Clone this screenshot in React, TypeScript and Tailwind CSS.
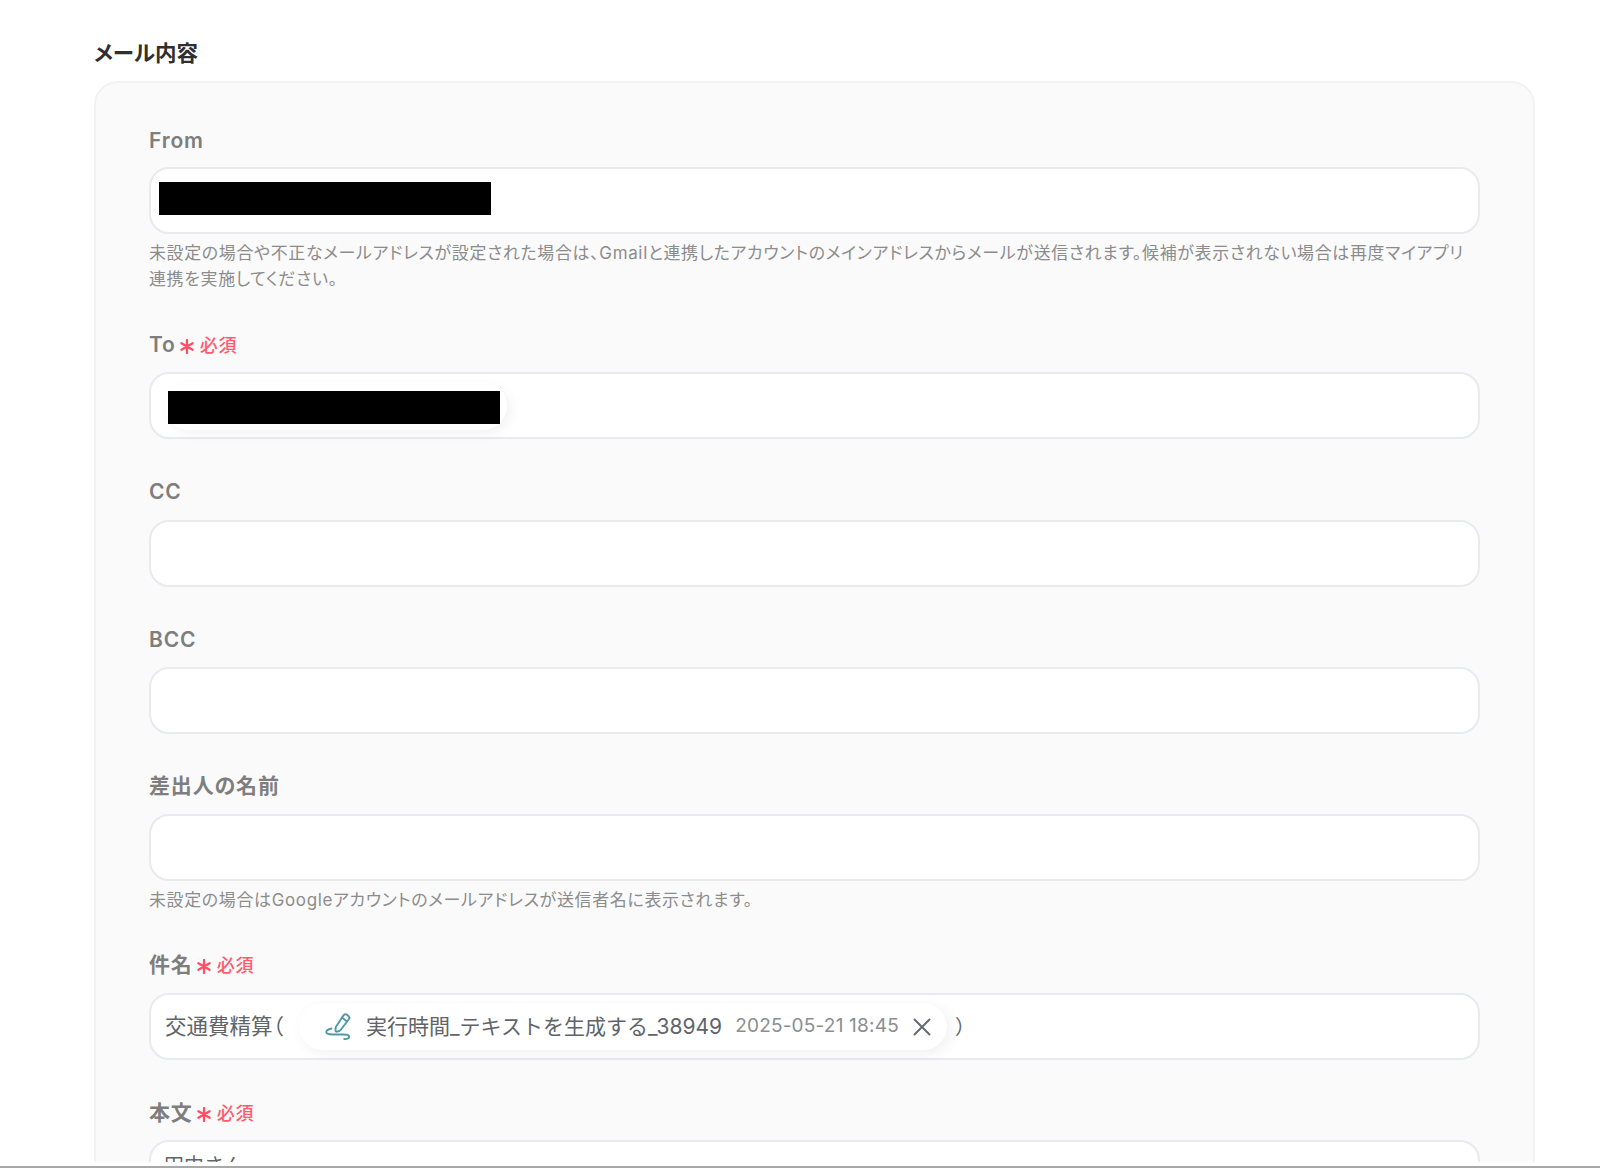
const font = "font-['Inter','Noto_Sans_CJK_JP',sans-serif]";

function PromptIcon() {
  return (
    <svg className="w-[26px] h-[28px] shrink-0" viewBox="0 0 26 28" fill="none" stroke="#4f98a8" strokeWidth="1.9" strokeLinecap="round" strokeLinejoin="round">
      <path d="M18.6 2.2a2.4 2.4 0 0 1 3.4-.4l1.4 1.1a2.4 2.4 0 0 1 .4 3.3L15.6 17a3 3 0 0 1-1.4 1l-2.4.7a1 1 0 0 1-1.3-1l.1-2.6a3 3 0 0 1 .6-1.7z" />
      <path d="M17 4.6l5 3.8" />
      <path d="M6.5 15.5c-2.7.6-5.2 1.8-5.2 3.6 0 2 2.6 2.4 6.4 2.4h10.5c3.4 0 6 .5 6 2.3 0 1.7-2.4 2.6-5 2.2" />
    </svg>
  );
}

function Required() {
  return (
    <span className="flex items-center text-[#ff5a6e] text-[18px] font-medium ml-[4px] gap-[6px]">
      <svg className="w-[14px] h-[15px] mt-[3px]" viewBox="0 0 14 15" fill="none" stroke="#ff4d63" strokeWidth="2.2" strokeLinecap="round">
        <path d="M7 1v13M1.4 4.2l11.2 6.6M12.6 4.2L1.4 10.8" />
      </svg>
      必須
    </span>
  );
}

function Label({ text, required }: { text: string; required?: boolean }) {
  return (
    <div className="flex items-center h-[30px] text-[21px] font-semibold tracking-[0.04em] [font-feature-settings:'palt'] text-[#7e7e7e]">
      {text}
      {required && <Required />}
    </div>
  );
}

function Field({ children }: { children?: React.ReactNode }) {
  return (
    <div className="flex items-center h-[67px] w-full rounded-[20px] border-2 border-[#e8eaee] bg-white">
      {children}
    </div>
  );
}

function Help({ children }: { children: React.ReactNode }) {
  return (
    <p className="mt-[6px] text-[16.95px] leading-[26px] tracking-[0.04em] [font-feature-settings:'palt'] text-[#8c8c8c]">
      {children}
    </p>
  );
}

export default function App() {
  return (
    <div className={`${font} w-[1600px] h-[1168px] overflow-hidden bg-white flex flex-col`}>
      <div className="h-[1162px] shrink-0 overflow-hidden pl-[94px] pr-[65px] pt-[37px]">
        <h2 className="text-[21.5px] leading-[32px] font-semibold [font-feature-settings:'palt'] text-[#2f2f2f]">メール内容</h2>
        <div className="mt-[12px] rounded-[24px] border-2 border-[#f2f2f3] bg-[#fafafa] px-[53px] pt-[43px] pb-[40px]">
          <Label text="From" />
          <div className="mt-[11px]">
            <Field>
              <div className="ml-[8px] mb-[4px] w-[332px] h-[33px] bg-black" />
            </Field>
          </div>
          <Help>
            未設定の場合や不正なメールアドレスが設定された場合は、Gmailと連携したアカウントのメインアドレスからメールが送信されます。候補が表示されない場合は再度マイアプリ連携を実施してください。
          </Help>

          <div className="mt-[38px]">
            <Label text="To" required />
          </div>
          <div className="mt-[12px]">
            <Field>
              <div className="ml-[14px] flex items-center h-[48px] pl-[3px] pr-[7px] rounded-full bg-white shadow-[4px_4px_12px_rgba(0,0,0,0.05)]">
                <div className="mt-[3px] w-[332px] h-[33px] bg-black" />
              </div>
            </Field>
          </div>

          <div className="mt-[38px]">
            <Label text="CC" />
          </div>
          <div className="mt-[13px]">
            <Field />
          </div>

          <div className="mt-[38px]">
            <Label text="BCC" />
          </div>
          <div className="mt-[12px]">
            <Field />
          </div>

          <div className="mt-[37px]">
            <Label text="差出人の名前" />
          </div>
          <div className="mt-[13px]">
            <Field />
          </div>
          <Help>未設定の場合はGoogleアカウントのメールアドレスが送信者名に表示されます。</Help>

          <div className="mt-[37px]">
            <Label text="件名" required />
          </div>
          <div className="mt-[13px]">
            <Field>
              <span className="ml-[14px] w-[134px] shrink-0 text-[21.5px] [font-feature-settings:'palt'] text-[#5f6468]">交通費精算（</span>
              <div className="flex items-center h-[47px] w-[648px] pl-[26px] rounded-full bg-white shadow-[4px_4px_14px_rgba(0,0,0,0.06)]">
                <PromptIcon />
                <span className="ml-[15px] text-[21px] text-[#5f6468] whitespace-nowrap">実行時間_テキストを生成する_38949</span>
                <span className="ml-[13px] text-[19px] tracking-[0.2px] text-[#8a8e92] whitespace-nowrap">2025-05-21 18:45</span>
                <svg className="ml-[13px] w-[20px] h-[20px]" viewBox="0 0 20 20" fill="none" stroke="#666b70" strokeWidth="2" strokeLinecap="round">
                  <path d="M2.5 2.5l15 15M17.5 2.5l-15 15" />
                </svg>
              </div>
              <span className="ml-[8px] text-[20px] text-[#5f6468]">）</span>
            </Field>
          </div>

          <div className="mt-[38px]">
            <Label text="本文" required />
          </div>
          <div className="mt-[12px]">
            <div className="h-[120px] rounded-[20px] border-2 border-[#e8eaee] bg-white px-[13px] pt-[9px] text-[20px] text-[#5f6468]">
              田中さん
            </div>
          </div>
        </div>
      </div>
      <div className="h-[4px] shrink-0 bg-white" />
      <div className="h-[2px] shrink-0 bg-[#a8a8a8]" />
    </div>
  );
}
